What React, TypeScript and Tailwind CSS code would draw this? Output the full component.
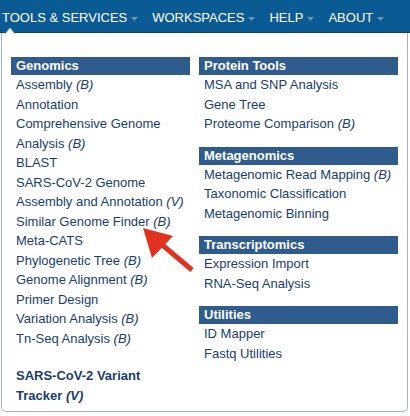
import React from "react";

type Item = { t: string; s?: string; bold?: boolean };

const Header = ({ children, className = "" }: { children: React.ReactNode; className?: string }) => (
  <div className={"h-[18px] bg-[#305b8d] text-white font-bold text-[13px] leading-[18px] pl-[5px] " + className}>
    {children}
  </div>
);

const Row = ({ it }: { it: Item }) => (
  <div className={"pl-[5px] text-[13px] leading-[19.5px] text-[#173e6c] " + (it.bold ? "font-bold" : "")}>
    {it.t}
    {it.s && <i> {it.s}</i>}
  </div>
);

const Caret = () => (
  <svg width="7" height="5" viewBox="0 0 7 5" className="ml-[4px] mt-[2px]">
    <polygon points="0,0 7,0 3.5,4" fill="#6f8fb3" />
  </svg>
);

export default function App() {
  const left: Item[] = [
    { t: "Assembly", s: "(B)" },
    { t: "Annotation" },
    { t: "Comprehensive Genome" },
    { t: "Analysis", s: "(B)" },
    { t: "BLAST" },
    { t: "SARS-CoV-2 Genome" },
    { t: "Assembly and Annotation", s: "(V)" },
    { t: "Similar Genome Finder", s: "(B)" },
    { t: "Meta-CATS" },
    { t: "Phylogenetic Tree", s: "(B)" },
    { t: "Genome Alignment", s: "(B)" },
    { t: "Primer Design" },
    { t: "Variation Analysis", s: "(B)" },
    { t: "Tn-Seq Analysis", s: "(B)" },
  ];
  const groups: { h: string; items: Item[] }[] = [
    { h: "Protein Tools", items: [{ t: "MSA and SNP Analysis" }, { t: "Gene Tree" }, { t: "Proteome Comparison", s: "(B)" }] },
    { h: "Metagenomics", items: [{ t: "Metagenomic Read Mapping", s: "(B)" }, { t: "Taxonomic Classification" }, { t: "Metagenomic Binning" }] },
    { h: "Transcriptomics", items: [{ t: "Expression Import" }, { t: "RNA-Seq Analysis" }] },
    { h: "Utilities", items: [{ t: "ID Mapper" }, { t: "Fastq Utilities" }] },
  ];
  return (
    <div className="relative w-[410px] h-[416px] bg-white overflow-hidden" style={{ fontFamily: '"Liberation Sans", Arial, sans-serif' }}>
      <div className="h-[33px] bg-[#0a5a94] border-b border-[#1c3a5c] flex items-center text-white text-[13px] pl-[2px] pt-[4px]">
        <div className="flex items-center">TOOLS &amp; SERVICES<Caret /></div>
        <div className="flex items-center ml-[14px]">WORKSPACES<Caret /></div>
        <div className="flex items-center ml-[14px]">HELP<Caret /></div>
        <div className="flex items-center ml-[14px]">ABOUT<Caret /></div>
      </div>
      <div className="mx-[1px] w-[407px] h-[379px] border border-t-0 border-[#9fb3cb] rounded-b-[5px] bg-white flex pl-[9px] pt-[24px]">
        <div className="w-[179px]">
          <Header>Genomics</Header>
          {left.map((it, i) => (
            <Row key={i} it={it} />
          ))}
          <div className="mt-[18px]">
            <Row it={{ t: "SARS-CoV-2 Variant", bold: true }} />
            <div className="pl-[5px] text-[13px] leading-[19.5px] text-[#173e6c] font-bold">
              Tracker <i>(V)</i>
            </div>
          </div>
        </div>
        <div className="w-[199px] ml-[9px]">
          {groups.map((g, gi) => (
            <div key={gi} className={gi === 0 ? "" : "mt-[13px]"}>
              <Header>{g.h}</Header>
              {g.items.map((it, i) => (
                <Row key={i} it={it} />
              ))}
            </div>
          ))}
        </div>
      </div>
      <svg className="absolute left-0 top-0 pointer-events-none" width="410" height="416" viewBox="0 0 410 416">
        <polygon points="5,34 10,28 15,34" fill="#ffffff" />
        <polyline points="5,34 10,28 15,34" fill="none" stroke="#9fb3cb" strokeWidth="1" />
        <line x1="160" y1="243" x2="192" y2="270" stroke="#e0321f" strokeWidth="5" />
        <polygon points="143,228 173,236 152,258" fill="#e0321f" />
      </svg>
    </div>
  );
}
